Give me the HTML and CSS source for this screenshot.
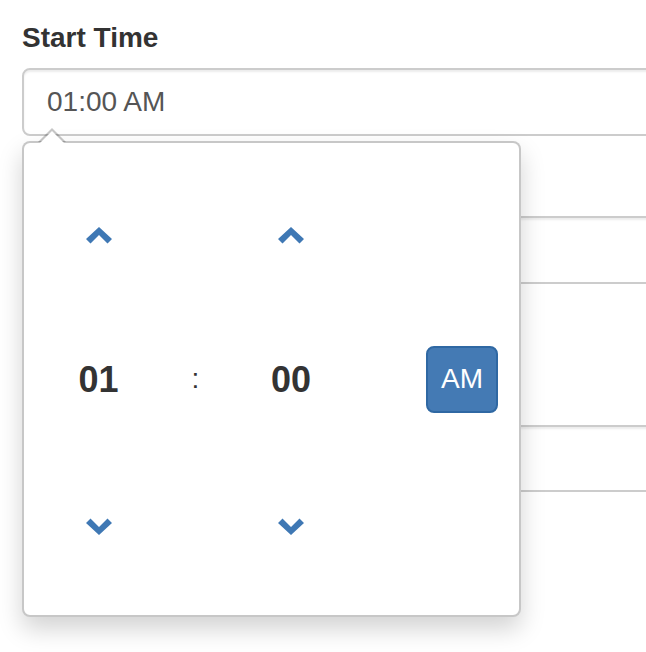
FILE: index.html
```html
<!DOCTYPE html>
<html>
<head>
<meta charset="utf-8">
<link rel="stylesheet" href="styles.css">
</head>
<body>
<div class="page">
  <div class="group group-start">
    <label class="label">Start Time</label>
    <div class="input">01:00 AM</div>

    <div class="picker">
      <div class="picker-grid">
        <a class="cell arrow"><svg width="26" height="17" viewBox="0 0 26 17"><polygon points="13,0 26,12 21.5,16.5 13,8 4.5,16.5 0,12" fill="#3f78b4"/></svg></a>
        <span class="cell"></span>
        <a class="cell arrow"><svg width="26" height="17" viewBox="0 0 26 17"><polygon points="13,0 26,12 21.5,16.5 13,8 4.5,16.5 0,12" fill="#3f78b4"/></svg></a>
        <span class="cell"></span>

        <span class="cell num">01</span>
        <span class="cell sep">:</span>
        <span class="cell num">00</span>
        <span class="cell mer"><button class="btn-mer">AM</button></span>

        <a class="cell arrow"><svg width="26" height="17" viewBox="0 0 26 17"><polygon points="13,17 26,5 21.5,0.5 13,9 4.5,0.5 0,5" fill="#3f78b4"/></svg></a>
        <span class="cell"></span>
        <a class="cell arrow"><svg width="26" height="17" viewBox="0 0 26 17"><polygon points="13,17 26,5 21.5,0.5 13,9 4.5,0.5 0,5" fill="#3f78b4"/></svg></a>
        <span class="cell"></span>
      </div>
    </div>
  </div>

  <div class="group">
    <label class="label">End Time</label>
    <div class="input"></div>
  </div>

  <div class="check-row"><span class="check"></span></div>

  <div class="group group-last">
    <label class="label label-tight">Duration</label>
    <div class="input input-short"></div>
  </div>
</div>
</body>
</html>
```

FILE: styles.css
```css
html, body {
  margin: 0;
  padding: 0;
  background: #fff;
}

html {
  overflow: hidden;
}

body {
  font-family: "Liberation Sans", Arial, Helvetica, sans-serif;
  color: #333;
}

.page {
  box-sizing: border-box;
  width: 646px;
  min-height: 652px;
  overflow: hidden;
  padding: 18px 0 0 22px;
}

.group {
  margin-bottom: 30px;
}

.group-start {
  position: relative;
}

.label {
  display: block;
  font-size: 28px;
  line-height: 40px;
  font-weight: bold;
  color: #333;
  margin-bottom: 10px;
}

.label-tight {
  margin-bottom: 12px;
}

.input {
  box-sizing: border-box;
  height: 68px;
  width: calc(100% + 60px);
  border: 2px solid #ccc;
  border-radius: 8px;
  box-shadow: inset 0 2px 2px rgba(0, 0, 0, 0.075);
  padding: 12px 23px;
  font-size: 28px;
  line-height: 40px;
  color: #555;
}

.input-short {
  height: 67px;
}

.check-row {
  height: 40px;
  margin-bottom: 19px;
  display: flex;
  align-items: center;
}

.check {
  display: block;
  width: 24px;
  height: 20px;
  border: 1px solid #bbb;
  border-radius: 4px;
}

/* dropdown time picker */
.picker {
  position: absolute;
  top: calc(100% + 5px);
  left: 0;
  width: 499px;
  height: 476px;
  box-sizing: border-box;
  background: #fff;
  border: 2px solid rgba(0, 0, 0, 0.22);
  border-radius: 8px;
  box-shadow: 0 12px 24px rgba(0, 0, 0, 0.175);
  z-index: 10;
}

.picker::before {
  content: "";
  position: absolute;
  top: -15px;
  left: 14px;
  border-left: 14px solid transparent;
  border-right: 14px solid transparent;
  border-bottom: 14px solid rgba(0, 0, 0, 0.22);
}

.picker::after {
  content: "";
  position: absolute;
  top: -12px;
  left: 16px;
  border-left: 12px solid transparent;
  border-right: 12px solid transparent;
  border-bottom: 12px solid #fff;
}

.picker-grid {
  display: grid;
  grid-template-columns: 149px 45px 146px 1fr;
  grid-template-rows: 144px 144px 150px;
  padding-top: 20px;
}

.cell {
  display: flex;
  align-items: center;
  justify-content: center;
}

.arrow svg {
  display: block;
}

.num {
  font-size: 36px;
  font-weight: bold;
  color: #333;
  line-height: 40px;
  padding-top: 2px;
}

.sep {
  font-size: 28px;
  color: #333;
  line-height: 40px;
}

.mer {
  justify-content: flex-start;
  padding-left: 62px;
}

.btn-mer {
  box-sizing: border-box;
  width: 72px;
  height: 67px;
  padding: 0;
  margin: 0;
  border: 2px solid #2f68a3;
  border-radius: 8px;
  background: #447ab4;
  color: #fff;
  font-family: "Liberation Sans", Arial, Helvetica, sans-serif;
  font-size: 28px;
  line-height: 40px;
  text-align: center;
}
```
